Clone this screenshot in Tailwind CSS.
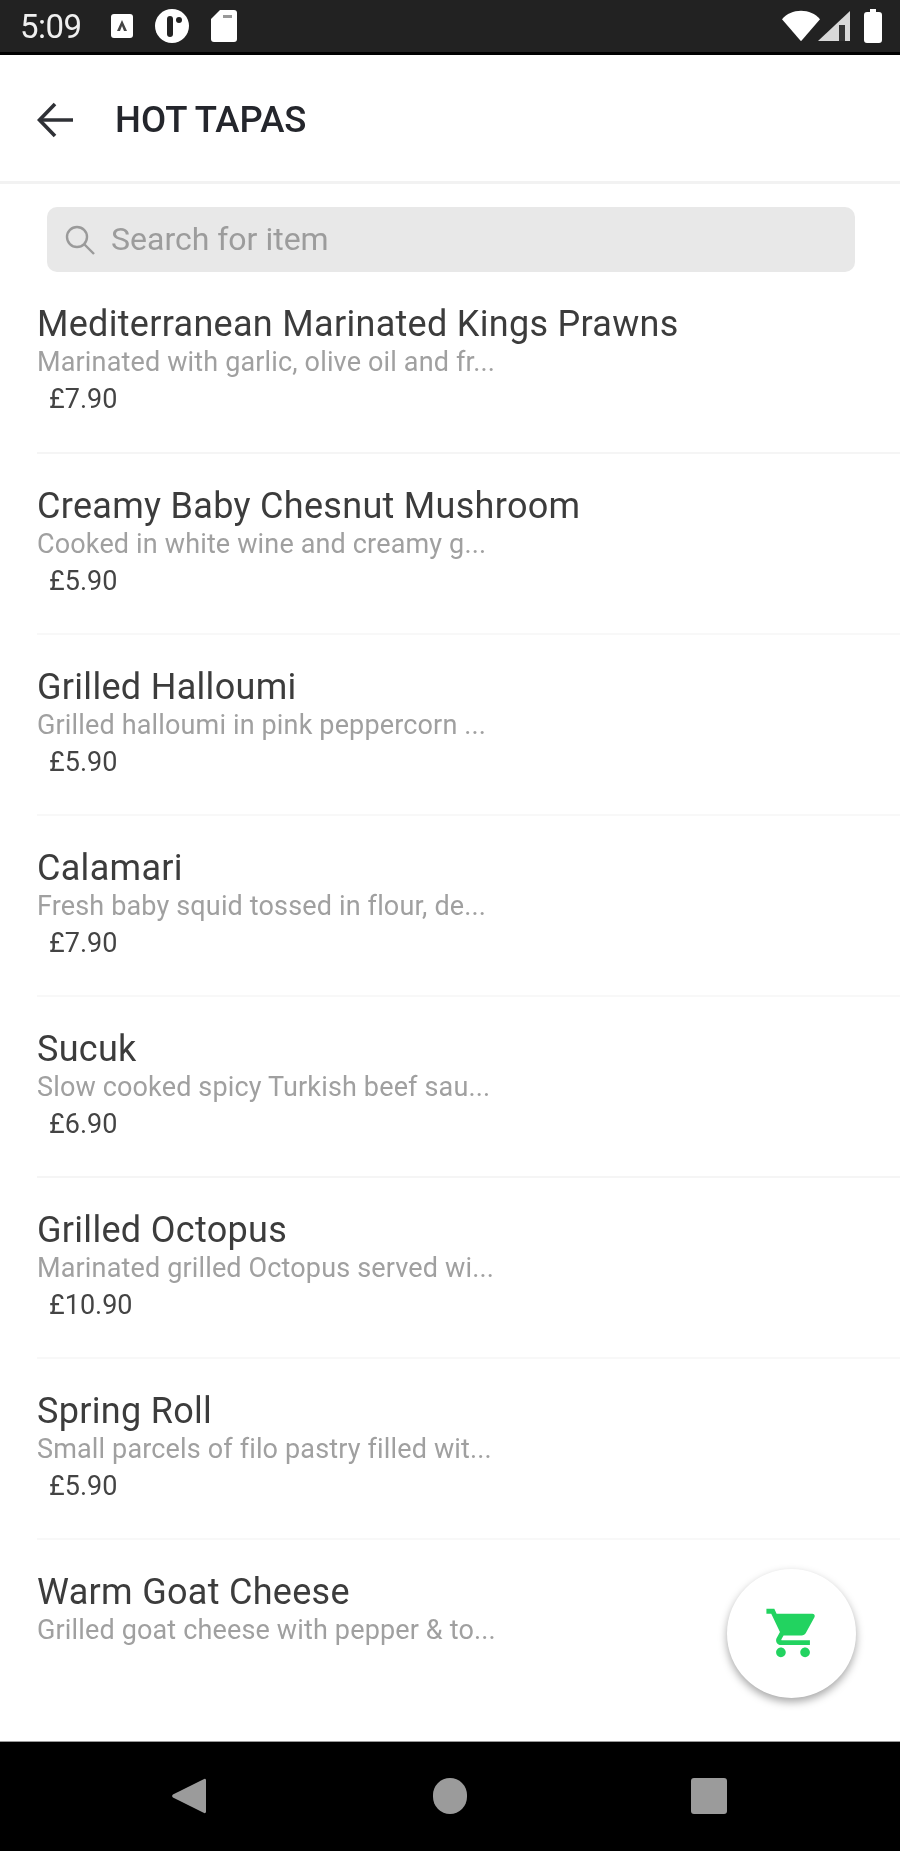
<!DOCTYPE html>
<html>
<head>
<meta charset="utf-8">
<script src="https://cdn.jsdelivr.net/npm/@tailwindcss/browser@4"></script>
</head>
<body class="m-0 bg-white">
<div class="relative w-[900px] h-[1851px] flex flex-col bg-white overflow-hidden font-['Roboto',sans-serif] blur-[0.6px]">
  <!-- status bar -->
  <div class="h-[55px] shrink-0 bg-[#222222] border-b-[3px] border-black flex items-center justify-between pl-[20px] pr-[18px] text-white">
    <div class="flex items-center">
      <span class="text-[33px] leading-none w-[91px] tracking-[-0.5px] text-[#f0f0f0]">5:09</span>
      <svg class="w-[22px] h-[24px]" viewBox="0 0 22 24"><rect width="22" height="24" rx="3" fill="#fff"/><path d="M11 6l5 11h-3l-2-5-2 5H6z" fill="#444"/></svg>
      <svg class="w-[36px] h-[36px] ml-[21px]" viewBox="0 0 36 36"><circle cx="18" cy="18" r="17" fill="#fff"/><path d="M16 7h-2c-4 2-6 6-6 11s2 9 6 11h2z" fill="#fff"/><rect x="13" y="8" width="6" height="21" rx="3" fill="#222"/><circle cx="25" cy="12" r="3" fill="#222"/></svg>
      <svg class="w-[26px] h-[32px] ml-[21px]" viewBox="0 0 26 32"><path d="M9 0h14a3 3 0 0 1 3 3v26a3 3 0 0 1-3 3H3a3 3 0 0 1-3-3V9z" fill="#fff"/><rect x="12" y="5" width="9" height="3" fill="#999"/></svg>
    </div>
    <div class="flex items-center">
      <svg class="w-[38px] h-[32px]" viewBox="0 0 40 32"><path d="M0 9C5 3 12 0 20 0s15 3 20 9L20 32z" fill="#fff"/></svg>
      <svg class="w-[32px] h-[30px] -ml-[2px]" viewBox="0 0 32 30"><path d="M32 0v30H0z" fill="#d8d8d8"/><path d="M21 14h6v16h-6z" fill="#333"/></svg>
      <svg class="w-[18px] h-[34px] ml-[14px]" viewBox="0 0 18 34"><path d="M6 0h6v3h3a3 3 0 0 1 3 3v25a3 3 0 0 1-3 3H3a3 3 0 0 1-3-3V6a3 3 0 0 1 3-3h3z" fill="#fff"/></svg>
    </div>
  </div>

  <!-- app bar -->
  <div class="h-[129px] shrink-0 border-b-[3px] border-[#f2f2f2] flex items-center pl-[37px] pt-[4px]">
    <svg class="w-[36px] h-[36px]" viewBox="0 0 36 36" fill="none" stroke="#2f3136" stroke-width="3.6"><path d="M36 18H3"/><path d="M18 2L2.500 18 18 34"/></svg>
    <h1 class="ml-[42px] text-[36.500px] leading-none font-medium text-[#24262c]">HOT TAPAS</h1>
  </div>

  <!-- search -->
  <div class="shrink-0 pl-[47px] pr-[45px] pt-[23px]">
    <div class="h-[65px] rounded-[10px] bg-[#e8e8e8] flex items-center pl-[17px]">
      <svg class="w-[32px] h-[32px]" viewBox="0 0 32 32" fill="none" stroke="#9a9a9a" stroke-width="2.400"><circle cx="13" cy="13" r="10"/><path d="M20.500 20.500L30 30"/></svg>
      <span class="ml-[15px] text-[32px] leading-none text-[#9c9c9c] -translate-y-[1px]">Search for item</span>
    </div>
  </div>

  <!-- list -->
  <div class="flex-1 min-h-0 overflow-hidden pl-[37px]">
    <div class="h-[182px] border-b-2 border-[#f5f5f5] pt-[31px]">
      <div class="text-[36px] leading-[42px] tracking-[0.3px] text-[#3c3c3c]">Mediterranean Marinated Kings Prawns</div>
      <div class="text-[27px] leading-[34px] tracking-[0.15px] text-[#a0a0a0]">Marinated with garlic, olive oil and fr...</div>
      <div class="mt-[3px] ml-[12px] text-[27px] leading-[34px] text-[#444444]">£7.90</div>
    </div>
    <div class="h-[181px] border-b-2 border-[#f8f8f8] pt-[31px]">
      <div class="text-[36px] leading-[42px] tracking-[0.3px] text-[#3c3c3c]">Creamy Baby Chesnut Mushroom</div>
      <div class="text-[27px] leading-[34px] tracking-[0.15px] text-[#a0a0a0]">Cooked in white wine and creamy g...</div>
      <div class="mt-[3px] ml-[12px] text-[27px] leading-[34px] text-[#444444]">£5.90</div>
    </div>
    <div class="h-[181px] border-b-2 border-[#f8f8f8] pt-[31px]">
      <div class="text-[36px] leading-[42px] tracking-[0.3px] text-[#3c3c3c]">Grilled Halloumi</div>
      <div class="text-[27px] leading-[34px] tracking-[0.15px] text-[#a0a0a0]">Grilled halloumi in pink peppercorn ...</div>
      <div class="mt-[3px] ml-[12px] text-[27px] leading-[34px] text-[#444444]">£5.90</div>
    </div>
    <div class="h-[181px] border-b-2 border-[#f8f8f8] pt-[31px]">
      <div class="text-[36px] leading-[42px] tracking-[0.3px] text-[#3c3c3c]">Calamari</div>
      <div class="text-[27px] leading-[34px] tracking-[0.15px] text-[#a0a0a0]">Fresh baby squid tossed in flour, de...</div>
      <div class="mt-[3px] ml-[12px] text-[27px] leading-[34px] text-[#444444]">£7.90</div>
    </div>
    <div class="h-[181px] border-b-2 border-[#f5f5f5] pt-[31px]">
      <div class="text-[36px] leading-[42px] tracking-[0.3px] text-[#3c3c3c]">Sucuk</div>
      <div class="text-[27px] leading-[34px] tracking-[0.15px] text-[#a0a0a0]">Slow cooked spicy Turkish beef sau...</div>
      <div class="mt-[3px] ml-[12px] text-[27px] leading-[34px] text-[#444444]">£6.90</div>
    </div>
    <div class="h-[181px] border-b-2 border-[#f8f8f8] pt-[31px]">
      <div class="text-[36px] leading-[42px] tracking-[0.3px] text-[#3c3c3c]">Grilled Octopus</div>
      <div class="text-[27px] leading-[34px] tracking-[0.15px] text-[#a0a0a0]">Marinated grilled Octopus served wi...</div>
      <div class="mt-[3px] ml-[12px] text-[27px] leading-[34px] text-[#444444]">£10.90</div>
    </div>
    <div class="h-[181px] border-b-2 border-[#f8f8f8] pt-[31px]">
      <div class="text-[36px] leading-[42px] tracking-[0.3px] text-[#3c3c3c]">Spring Roll</div>
      <div class="text-[27px] leading-[34px] tracking-[0.15px] text-[#a0a0a0]">Small parcels of filo pastry filled wit...</div>
      <div class="mt-[3px] ml-[12px] text-[27px] leading-[34px] text-[#444444]">£5.90</div>
    </div>
    <div class="pt-[31px]">
      <div class="text-[36px] leading-[42px] tracking-[0.3px] text-[#3c3c3c]">Warm Goat Cheese</div>
      <div class="text-[27px] leading-[34px] tracking-[0.15px] text-[#a0a0a0]">Grilled goat cheese with pepper &amp; to...</div>
    </div>
  </div>

  <!-- nav bar -->
  <div class="h-[110px] shrink-0 bg-black border-t border-[#999] flex items-center justify-between pl-[172px] pr-[173px] pb-[2px]">
    <svg class="w-[34px] h-[38px]" viewBox="0 0 36 38"><path d="M34 1a1.500 1.500 0 0 1 2 1v34a1.500 1.500 0 0 1-2 1L1 20.500a2 2 0 0 1 0-3z" fill="#9b9b9b"/></svg>
    <div class="w-[34px] h-[36px] rounded-full bg-[#9b9b9b] ml-[2px]"></div>
    <div class="w-[36px] h-[36px] rounded-[3px] bg-[#9b9b9b]"></div>
  </div>

  <!-- cart FAB -->
  <div class="absolute left-[727px] top-[1569px] w-[129px] h-[129px] rounded-full bg-white shadow-[0_4px_8px_rgba(0,0,0,0.35)] flex items-center justify-center">
    <svg class="w-[58px] h-[58px] ml-[3px] mt-[-1px]" viewBox="0 0 24 24" fill="#22d360"><path d="M7 18c-1.100 0-1.990.9-1.990 2S5.900 22 7 22s2-.9 2-2-.9-2-2-2zM1 2v2h2l3.600 7.590-1.350 2.450c-.16.280-.25.610-.25.960 0 1.100.9 2 2 2h12v-2H7.420c-.140 0-.250-.110-.250-.250l.030-.120.900-1.630h7.450c.750 0 1.410-.410 1.750-1.030l3.580-6.490A1 1 0 0 0 20 4H5.210l-.940-2H1zm16 16c-1.100 0-1.990.9-1.990 2s.890 2 1.990 2 2-.9 2-2-.9-2-2-2z"/></svg>
  </div>
</div>
</body>
</html>
